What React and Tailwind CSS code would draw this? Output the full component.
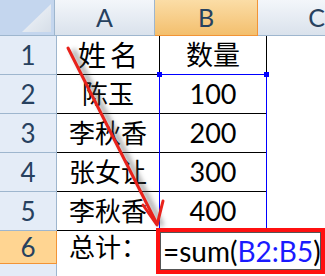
import React from "react";

const FONT = { fontFamily: '"Lato", "Noto Sans CJK SC", sans-serif' };

const rows = [
  { n: "1", a: "姓名", b: "数量", wide: true },
  { n: "2", a: "陈玉", b: "100" },
  { n: "3", a: "李秋香", b: "200" },
  { n: "4", a: "张女让", b: "300" },
  { n: "5", a: "李秋香", b: "400" },
];

export default function App() {
  return (
    <div className="relative w-[325px] h-[276px] overflow-hidden bg-white" style={FONT}>
      {/* header row */}
      <div className="flex h-[36px]">
        <div className="w-[57px] h-full border-r border-b border-[#9eb6ce] bg-[#c4d6ee] flex items-end justify-end pr-[3px] pb-[3px]">
          <svg width="29" height="28" viewBox="0 0 29 28">
            <defs>
              <linearGradient id="tri" x1="0" y1="0" x2="1" y2="1">
                <stop offset="0" stopColor="#f4f7fb" />
                <stop offset="1" stopColor="#d6dee8" />
              </linearGradient>
            </defs>
            <polygon points="29,0 29,28 0,28" fill="url(#tri)" />
          </svg>
        </div>
        <div className="w-[103px] h-full border-r border-b border-[#9eb6ce] bg-gradient-to-b from-[#f3f6fa] to-[#dae2ec] flex items-center justify-center text-[25px] text-[#27415f]">
          A
        </div>
        <div className="w-[107px] h-full border-r border-b border-[#f29436] bg-gradient-to-b from-[#fbdda6] to-[#f3bf6d] flex items-center justify-center text-[25px] text-[#27415f]">
          B
        </div>
        <div className="flex-1 h-full border-b border-[#9eb6ce] bg-gradient-to-b from-[#f3f6fa] to-[#dae2ec] flex items-center pl-[50px] text-[25px] text-[#27415f]">
          C
        </div>
      </div>

      {rows.map((r) => (
        <div key={r.n} className="flex h-[39px]">
          <div className="w-[57px] h-full border-r border-b border-[#9eb6ce] bg-[#e4ecf7] flex items-center justify-center text-[26px] text-[#27415f]">
            {r.n}
          </div>
          <div className="w-[103px] h-full border-r border-b border-black flex items-center justify-center text-[26px] text-black">
            {r.wide ? <span className="text-[28px] tracking-[4px] mr-[-4px]">{r.a}</span> : r.a}
          </div>
          <div className="w-[107px] h-full border-r border-b border-black flex items-center justify-center text-[27px] text-black">
            {r.b}
          </div>
          <div className="flex-1 h-full" />
        </div>
      ))}

      {/* row 6 */}
      <div className="flex h-[33px]">
        <div className="w-[57px] h-full border-r border-b border-[#f29436] bg-[#ffd592] flex items-center justify-center text-[26px] text-[#27415f]">
          6
        </div>
        <div className="w-[103px] h-full flex items-center pl-[12px] text-[26px] text-black">
          总计：
        </div>
        <div className="flex-1 h-full" />
      </div>

      {/* row 7 */}
      <div className="flex h-[13px]">
        <div className="w-[57px] h-full border-r border-[#9eb6ce] bg-[#e4ecf7]" />
        <div className="flex-1 h-full" />
      </div>

      {/* selection B2:B5 */}
      <div className="absolute left-[159px] top-[74px] w-[108px] h-[157px] border border-[#0000ff] pointer-events-none" />
      <div className="absolute left-[157px] top-[72px] w-[5px] h-[5px] bg-[#0000ff]" />
      <div className="absolute left-[264px] top-[72px] w-[5px] h-[5px] bg-[#0000ff]" />

      {/* active cell with red box */}
      <div className="absolute left-[156px] top-[228px] w-[169px] h-[46px] border-[4px] border-[#ff1010] bg-white">
        <div className="w-full h-full border border-[#555555] flex items-center pl-[2px] text-[28px] text-black whitespace-nowrap">
          <span>=sum(</span>
          <span className="text-[#1a1aff]">B2:B5</span>
          <span>)</span>
        </div>
      </div>

      {/* red arrow */}
      <svg className="absolute left-0 top-0 pointer-events-none" width="325" height="276" viewBox="0 0 325 276">
        <defs>
          <filter id="sh" x="-20%" y="-20%" width="140%" height="140%">
            <feGaussianBlur stdDeviation="2.5" />
          </filter>
        </defs>
        <g opacity="0.5" filter="url(#sh)" transform="translate(5,2)">
          <line x1="68" y1="48" x2="157" y2="224" stroke="#555" strokeWidth="5" />
        </g>
        <line x1="68" y1="48" x2="157" y2="224" stroke="#e8221b" strokeWidth="3" strokeLinecap="round" />
        <polyline points="143,205 157,225 163,201" fill="none" stroke="#e8221b" strokeWidth="3" strokeLinecap="round" strokeLinejoin="round" />
      </svg>
    </div>
  );
}
